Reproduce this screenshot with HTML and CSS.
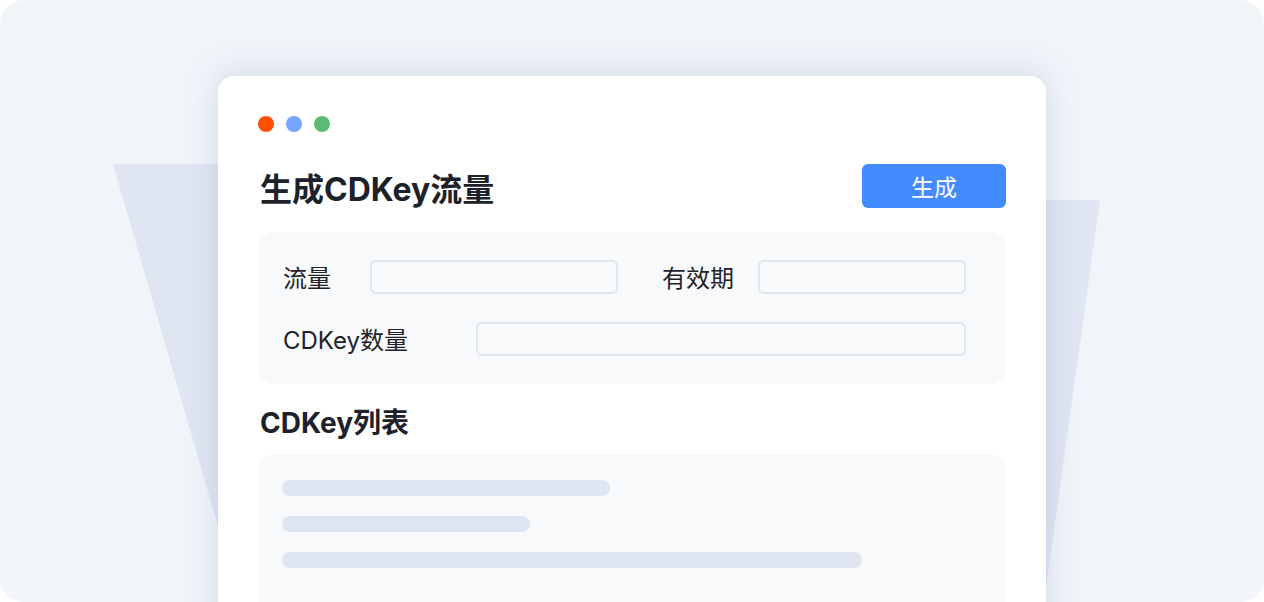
FILE: index.html
```html
<!DOCTYPE html>
<html lang="zh">
<head>
<meta charset="utf-8">
<link rel="stylesheet" href="styles.css">
</head>
<body>
<div class="stage">
  <svg class="backdrop" width="1264" height="602" viewBox="0 0 1264 602">
    <polygon points="113,164 640,164 640,200 1100,200 1044,602 240,602" fill="#dfe5f1"/>
  </svg>
  <div class="card">
    <div class="dots">
      <span class="dot dot-red"></span>
      <span class="dot dot-blue"></span>
      <span class="dot dot-green"></span>
    </div>
    <div class="header">
      <h1 class="title">生成CDKey流量</h1>
      <button class="btn">生成</button>
    </div>
    <div class="form-panel">
      <div class="row">
        <label class="label label-flow">流量</label>
        <div class="input input-flow"></div>
        <label class="label label-valid">有效期</label>
        <div class="input input-valid"></div>
      </div>
      <div class="row">
        <label class="label label-count">CDKey数量</label>
        <div class="input input-count"></div>
      </div>
    </div>
    <h2 class="subtitle">CDKey列表</h2>
    <div class="list-panel">
      <div class="bar bar-1"></div>
      <div class="bar bar-2"></div>
      <div class="bar bar-3"></div>
    </div>
  </div>
</div>
</body>
</html>
```

FILE: styles.css
```css
* { box-sizing: border-box; }
html, body {
  margin: 0;
  padding: 0;
  background: #ffffff;
}
body {
  font-family: Inter, "Noto Sans CJK SC", sans-serif;
  color: #1d2129;
}
.stage {
  position: relative;
  width: 1264px;
  height: 602px;
  border-radius: 24px;
  background: #f1f4f9;
  overflow: hidden;
  padding-top: 76px;
  padding-left: 218px;
}
.backdrop {
  position: absolute;
  left: 0;
  top: 0;
}
.card {
  position: relative;
  width: 828px;
  height: 600px;
  background: #ffffff;
  border-radius: 16px;
  box-shadow: 0 -4px 32px rgba(150, 165, 200, 0.32);
  padding: 40px 40px 0 40px;
}
.dots {
  display: flex;
  gap: 12px;
  height: 16px;
}
.dot {
  width: 16px;
  height: 16px;
  border-radius: 50%;
}
.dot-red { background: #ff5000; }
.dot-blue { background: #76a6ff; }
.dot-green { background: #5dbb76; }
.header {
  margin-top: 32px;
  height: 44px;
  display: flex;
  align-items: center;
  justify-content: space-between;
}
.title {
  margin: 0 0 0 2px;
  font-size: 32px;
  font-weight: 700;
  line-height: 44px;
  position: relative;
  top: 4px;
}
.btn {
  width: 144px;
  height: 44px;
  border: none;
  border-radius: 6px;
  background: #438bff;
  color: #ffffff;
  font-family: Inter, "Noto Sans CJK SC", sans-serif;
  font-size: 23px;
  padding: 0;
}
.form-panel {
  margin-top: 24px;
  background: #f7f9fb;
  border-radius: 16px;
  padding: 28px 25px;
  display: flex;
  flex-direction: column;
  gap: 28px;
}
.row {
  display: flex;
  align-items: center;
  height: 34px;
}
.label {
  font-size: 24px;
  line-height: 34px;
  color: #1f2329;
  position: relative;
  top: 2px;
}
.label-flow { width: 87px; }
.label-valid { width: 96px; margin-left: 44px; }
.label-count { width: 193px; }
.input {
  height: 34px;
  background: #f7f9fb;
  border: 2px solid #e0e6f1;
  border-radius: 6px;
}
.input-flow { width: 248px; }
.input-valid { width: 208px; }
.input-count { width: 490px; }
.subtitle {
  margin: 0 0 0 2px;
  height: 70px;
  font-size: 28px;
  font-weight: 700;
  line-height: 70px;
  position: relative;
  top: 4px;
}
.list-panel {
  background: #f7f9fb;
  border-radius: 16px;
  height: 200px;
  padding: 26px 24px;
  display: flex;
  flex-direction: column;
  gap: 20px;
}
.bar {
  height: 16px;
  border-radius: 8px;
  background: #dfe5f1;
}
.bar-1 { width: 328px; }
.bar-2 { width: 248px; }
.bar-3 { width: 580px; }
```
